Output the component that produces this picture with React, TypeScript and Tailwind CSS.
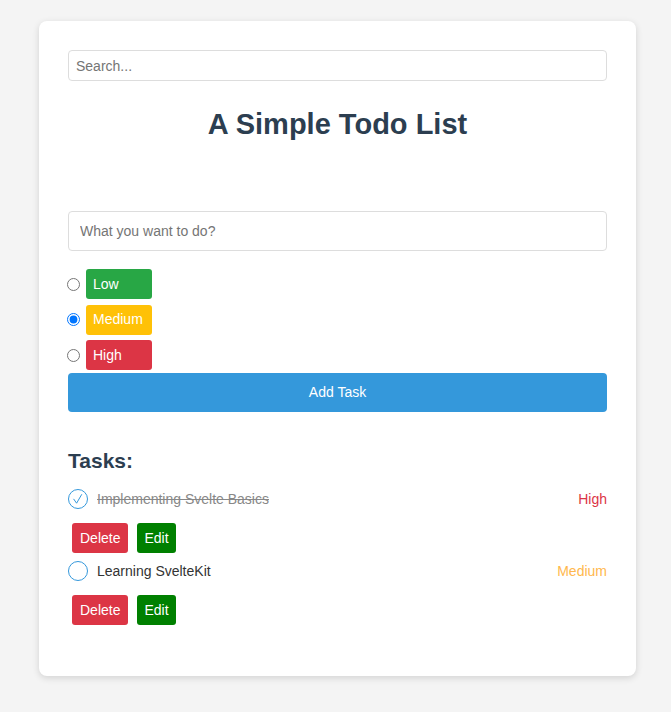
import { useState } from "react";

type Priority = "Low" | "Medium" | "High";

interface Task {
  id: number;
  text: string;
  priority: Priority;
  done: boolean;
}

const priorityBox: Record<Priority, string> = {
  Low: "bg-[#28a745]",
  Medium: "bg-[#ffc107]",
  High: "bg-[#dc3545]",
};

const priorityText: Record<Priority, string> = {
  Low: "text-[#28a745]",
  Medium: "text-[#ffb84d]",
  High: "text-[#dc3545]",
};

function CheckCircle({ done }: { done: boolean }) {
  return (
    <svg width="20" height="20" viewBox="0 0 20 20" className="shrink-0">
      <circle cx="10" cy="10" r="9.5" fill="none" stroke="#3498db" strokeWidth="1" />
      {done && (
        <path
          d="M5.8 10.2 L8.6 14.2 L13.6 5.6"
          fill="none"
          stroke="#3498db"
          strokeWidth="1"
          strokeLinecap="round"
          strokeLinejoin="round"
        />
      )}
    </svg>
  );
}

export default function App() {
  const [priority, setPriority] = useState<Priority>("Medium");
  const [tasks] = useState<Task[]>([
    { id: 1, text: "Implementing Svelte Basics", priority: "High", done: true },
    { id: 2, text: "Learning SvelteKit", priority: "Medium", done: false },
  ]);

  return (
    <div className="min-h-[712px] bg-[#f4f4f4] pt-[21px] pb-[36px] font-['Liberation_Sans',Arial,sans-serif]">
      <div className="ml-[39px] w-[597px] rounded-lg bg-white px-[29px] pt-[29px] pb-[51px] shadow-[0_2px_7px_rgba(0,0,0,0.14)]">
        <input
          type="text"
          placeholder="Search..."
          className="block h-[31px] w-full rounded-[4px] border border-[#ddd] px-[7px] text-[14px] text-[#333] placeholder:text-[#757575] outline-none"
        />

        <h1 className="mt-[27px] text-center text-[29px] leading-[32px] font-bold text-[#2c3e50]">
          A Simple Todo List
        </h1>

        <input
          type="text"
          placeholder="What you want to do?"
          className="mt-[71px] block h-[40px] w-full rounded-[4px] border border-[#ddd] px-[11px] text-[14px] text-[#333] placeholder:text-[#757575] outline-none"
        />

        <div className="mt-[18px] flex flex-col gap-[5.5px]">
          {(["Low", "Medium", "High"] as Priority[]).map((p) => (
            <label key={p} className="flex items-center">
              <input
                type="radio"
                name="priority"
                checked={priority === p}
                onChange={() => setPriority(p)}
                className="m-0 ml-[-1px] mr-[6px] h-[13px] w-[13px] accent-[#0075ff]"
              />
              <span
                className={`${priorityBox[p]} flex h-[30px] w-[66px] items-center rounded-[3px] px-[7px] text-[14px] text-white`}
              >
                {p}
              </span>
            </label>
          ))}
        </div>

        <button className="mt-[3px] block h-[39px] w-full rounded-[4px] bg-[#3498db] text-[14px] text-white">
          Add Task
        </button>

        <h2 className="mt-[37px] text-[21px] leading-[24px] font-bold text-[#2c3e50]">Tasks:</h2>

        <ul className="mt-[16px]">
          {tasks.map((t, i) => (
            <li key={t.id} className={i > 0 ? "mt-[8px]" : ""}>
              <div className="flex h-[20px] items-center justify-between">
                <div className="flex items-center gap-[9px]">
                  <CheckCircle done={t.done} />
                  <span
                    className={`text-[14px] ${t.done ? "text-[#888] line-through" : "text-[#333]"}`}
                  >
                    {t.text}
                  </span>
                </div>
                <span className={`text-[14px] ${priorityText[t.priority]}`}>{t.priority}</span>
              </div>
              <div className="mt-[14px] flex gap-[9px] pl-[4px]">
                <button className="h-[30px] rounded-[3px] bg-[#dc3545] px-[8px] text-[14px] text-white">
                  Delete
                </button>
                <button className="h-[30px] rounded-[3px] bg-[#008000] px-[7px] text-[14px] text-white">
                  Edit
                </button>
              </div>
            </li>
          ))}
        </ul>
      </div>
    </div>
  );
}
